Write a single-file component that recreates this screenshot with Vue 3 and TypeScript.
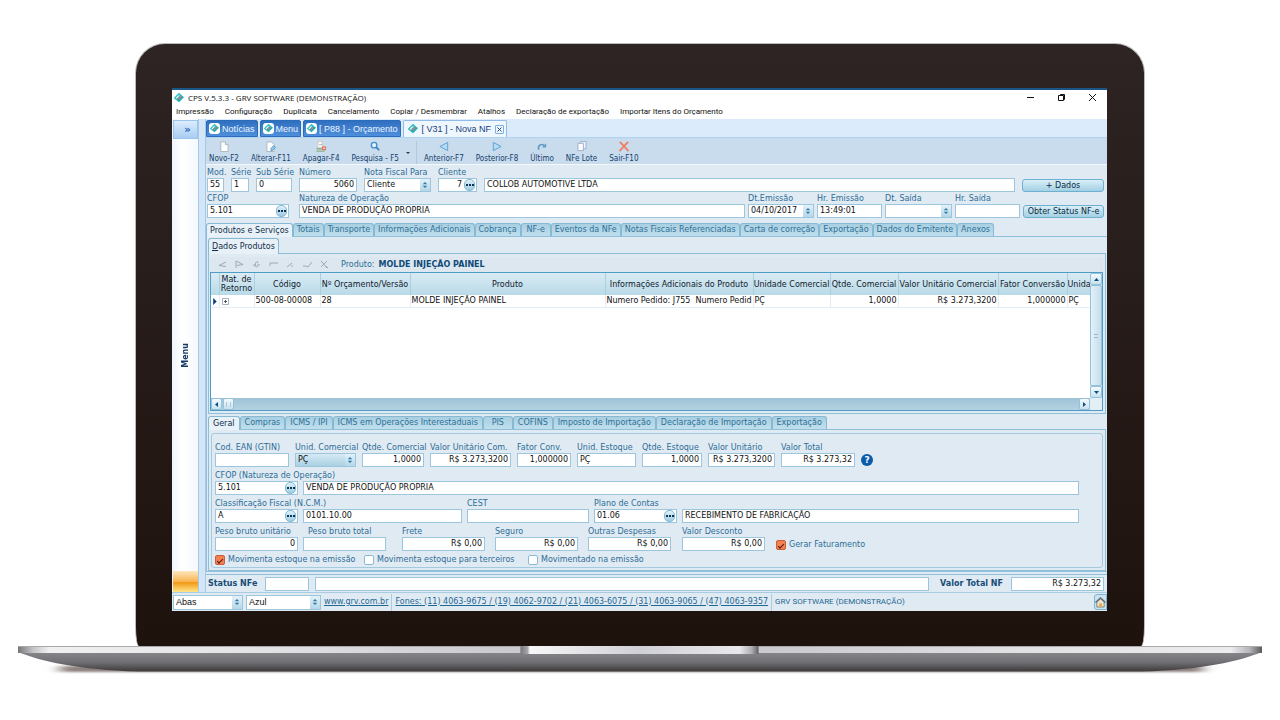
<script setup lang="ts">
import { ref } from 'vue'

type Kind = 'text' | 'select' | 'spin' | 'lookup' | 'button' | 'check' | 'help'
interface Field {
  id: string
  label: string
  value?: string
  kind?: Kind
  right?: boolean
  cls?: string
  checked?: boolean
}
interface Row { cls: string; fields: Field[] }

const menus = ['Impressão', 'Configuração', 'Duplicata', 'Cancelamento', 'Copiar / Desmembrar', 'Atalhos', 'Declaração de exportação', 'Importar Itens do Orçamento']
const docTabs = ['Notícias', 'Menu', '[ P88 ] - Orçamento']

const tools = [
  { label: 'Novo-F2', icon: 'new' },
  { label: 'Alterar-F11', icon: 'edit' },
  { label: 'Apagar-F4', icon: 'delete' },
  { label: 'Pesquisa - F5', icon: 'search' },
  { label: '', icon: 'more' },
  { label: 'Anterior-F7', icon: 'prev' },
  { label: 'Posterior-F8', icon: 'next' },
  { label: 'Último', icon: 'last' },
  { label: 'NFe Lote', icon: 'batch' },
  { label: 'Sair-F10', icon: 'exit' },
]

const headRows: Row[] = [
  {
    cls: 'r-head1',
    fields: [
      { id: 'mod', label: 'Mod.', value: '55' },
      { id: 'serie', label: 'Série', value: '1' },
      { id: 'subserie', label: 'Sub Série', value: '0' },
      { id: 'numero', label: 'Número', value: '5060', right: true },
      { id: 'nfpara', label: 'Nota Fiscal Para', value: 'Cliente', kind: 'select' },
      { id: 'cliente', label: 'Cliente', value: '7', right: true, kind: 'lookup' },
      { id: 'clientenome', label: '', value: 'COLLOB AUTOMOTIVE LTDA' },
      { id: 'dados', label: '+ Dados', kind: 'button' },
    ],
  },
  {
    cls: 'r-head2',
    fields: [
      { id: 'cfop', label: 'CFOP', value: '5.101', kind: 'lookup', cls: 'spaced' },
      { id: 'natureza', label: 'Natureza de Operação', value: 'VENDA DE PRODUÇÃO PROPRIA' },
      { id: 'dtemissao', label: 'Dt.Emissão', value: '04/10/2017', kind: 'spin' },
      { id: 'hremissao', label: 'Hr. Emissão', value: '13:49:01' },
      { id: 'dtsaida', label: 'Dt. Saída', value: '', kind: 'spin' },
      { id: 'hrsaida', label: 'Hr. Saída', value: '' },
      { id: 'status', label: 'Obter Status NF-e', kind: 'button' },
    ],
  },
]

const detailRows: Row[] = [
  {
    cls: 'r-a',
    fields: [
      { id: 'ean', label: 'Cod. EAN (GTIN)', value: '' },
      { id: 'unidcom', label: 'Unid. Comercial', value: 'PÇ', kind: 'select', cls: 'tinted' },
      { id: 'qtdecom', label: 'Qtde. Comercial', value: '1,0000', right: true },
      { id: 'valorcom', label: 'Valor Unitário Com.', value: 'R$ 3.273,3200', right: true },
      { id: 'fator', label: 'Fator Conv.', value: '1,000000', right: true },
      { id: 'unidest', label: 'Unid. Estoque', value: 'PÇ' },
      { id: 'qtdeest', label: 'Qtde. Estoque', value: '1,0000', right: true },
      { id: 'valorunit', label: 'Valor Unitário', value: 'R$ 3.273,3200', right: true },
      { id: 'valortotal', label: 'Valor Total', value: 'R$ 3.273,32', right: true },
      { id: 'ajuda', label: 'Ajuda', kind: 'help' },
    ],
  },
  {
    cls: 'r-b',
    fields: [
      { id: 'cfop2', label: 'CFOP (Natureza de Operação)', value: '5.101', kind: 'lookup' },
      { id: 'cfop2nome', label: '', value: 'VENDA DE PRODUÇÃO PROPRIA' },
    ],
  },
  {
    cls: 'r-c',
    fields: [
      { id: 'ncm', label: 'Classificação Fiscal (N.C.M.)', value: 'A', kind: 'lookup' },
      { id: 'ncmcod', label: '', value: '0101.10.00' },
      { id: 'cest', label: 'CEST', value: '' },
      { id: 'plano', label: 'Plano de Contas', value: '01.06', kind: 'lookup' },
      { id: 'planonome', label: '', value: 'RECEBIMENTO DE FABRICAÇÃO' },
    ],
  },
  {
    cls: 'r-d',
    fields: [
      { id: 'pesou', label: 'Peso bruto unitário', value: '0', right: true },
      { id: 'pesot', label: 'Peso bruto total', value: '', cls: 'indent' },
      { id: 'frete', label: 'Frete', value: 'R$ 0,00', right: true },
      { id: 'seguro', label: 'Seguro', value: 'R$ 0,00', right: true },
      { id: 'outras', label: 'Outras Despesas', value: 'R$ 0,00', right: true },
      { id: 'desconto', label: 'Valor Desconto', value: 'R$ 0,00', right: true },
      { id: 'faturamento', label: 'Gerar Faturamento', kind: 'check', checked: true },
    ],
  },
  {
    cls: 'r-e',
    fields: [
      { id: 'movest', label: 'Movimenta estoque na emissão', kind: 'check', checked: true },
      { id: 'movter', label: 'Movimenta estoque para terceiros', kind: 'check' },
      { id: 'movemi', label: 'Movimentado na emissão', kind: 'check' },
    ],
  },
]

const mainTabs = ['Produtos e Serviços', 'Totais', 'Transporte', 'Informações Adicionais', 'Cobrança', 'NF-e', 'Eventos da NFe', 'Notas Fiscais Referenciadas', 'Carta de correção', 'Exportação', 'Dados do Emitente', 'Anexos']
const detailTabs = ['Geral', 'Compras', 'ICMS / IPI', 'ICMS em Operações Interestaduais', 'PIS', 'COFINS', 'Imposto de Importação', 'Declaração de Importação', 'Exportação']
const mainTab = ref(0)
const detailTab = ref(0)

const navIcons = [
  'M8 2 1 5.500 8 6.500',
  'M1 8V1l7 3.500-6 1',
  'M1 5.500 4 4M3 7 4 2M5 1l1 2M5 5h3M4 7l2-1',
  'M1 6V3h8',
  'M1 7 6 3M5 6h2',
  'M0 6h3l2 1 4-5',
  'M1 1l6 7M7 1 1 7M6 6l2 2',
]

const columns = [
  { title: '', cls: 'c-mark', right: false },
  { title: 'Mat. de Retorno', cls: 'c-mat', right: false },
  { title: 'Código', cls: 'c-cod', right: false },
  { title: 'Nº Orçamento/Versão', cls: 'c-orc', right: false },
  { title: 'Produto', cls: 'c-prod', right: false },
  { title: 'Informações Adicionais do Produto', cls: 'c-info', right: false },
  { title: 'Unidade Comercial', cls: 'c-uni', right: false },
  { title: 'Qtde. Comercial', cls: 'c-qtd', right: true },
  { title: 'Valor Unitário Comercial', cls: 'c-val', right: true },
  { title: 'Fator Conversão', cls: 'c-fat', right: true },
  { title: 'Unida', cls: 'c-und', right: false },
]
const line = ['', '', '500-08-00008', '28', 'MOLDE INJEÇÃO PAINEL', 'Numero Pedido: J755  Numero Pedid', 'PÇ', '1,0000', 'R$ 3.273,3200', '1,000000', 'PÇ']
</script>

<template>
  <svg class="defs" aria-hidden="true">
    <symbol id="logo" viewBox="0 0 12 12">
      <path d="M6 0 12 5 6 11 0 6Z" fill="#12b3b8" />
      <path d="M6 0 9 3 3 9 0 6Z" fill="#35c4c6" />
      <path d="M8 3 10 5 5 9 3 7Z" fill="#8b8d92" />
      <path d="M5 3h2L3 7 2 6Z" fill="#e8fafa" />
    </symbol>
    <symbol id="spin" viewBox="0 0 8 10">
      <path d="M4 1 7 4H1ZM1 6h6L4 9Z" fill="#2f7aa6" />
    </symbol>
  </svg>

  <div class="laptop">
    <div class="lid">
      <main class="screen">
        <header class="titlebar">
          <svg class="app-logo"><use href="#logo" /></svg>
          <h1>CPS V.5.3.3 - GRV SOFTWARE (DEMONSTRAÇÃO)</h1>
          <div class="win">
            <button aria-label="Minimizar"><svg viewBox="0 0 9 9"><path d="M1 4.500h7" /></svg></button>
            <button aria-label="Restaurar"><svg viewBox="0 0 9 9"><path d="M3.500 2.500V1.500h4v5h-1M1.500 2.500h5v5h-5z" /></svg></button>
            <button aria-label="Fechar"><svg viewBox="0 0 9 9"><path d="M1 1l7 7M8 1 1 8" /></svg></button>
          </div>
        </header>
        <nav class="menubar"><button v-for="m in menus" :key="m">{{ m }}</button></nav>

        <div class="work">
          <aside class="side">
            <button class="expand" aria-label="Expandir">»</button>
            <span class="side-label">Menu</span>
            <span class="side-foot"></span>
          </aside>

          <section class="content">
            <div class="doctabs">
              <button v-for="t in docTabs" :key="t" class="doctab">
                <span class="chip"><svg><use href="#logo" /></svg></span>{{ t }}
              </button>
              <div class="doctab current">
                <svg class="cur-logo"><use href="#logo" /></svg>[ V31 ] - Nova NF
                <button class="close" aria-label="Fechar aba"><svg viewBox="0 0 7 7"><path d="M1.500 1.500l4 4M5.500 1.500l-4 4" /></svg></button>
              </div>
            </div>

            <div class="toolbar">
              <button v-for="t in tools" :key="t.icon" class="tool" :class="t.icon" :aria-label="t.label || 'Mais opções'">
                <svg v-if="t.icon === 'new'" viewBox="0 0 12 12"><path d="M2.500 1h5l3 3v7.500h-8z" fill="#fdfefe" stroke="#a9b3bc" /><path d="M7.500 1v3h3" fill="#dfe6ec" stroke="#a9b3bc" /></svg>
                <svg v-else-if="t.icon === 'edit'" viewBox="0 0 12 12"><path d="M1.500 1h5l3 3v7.500h-8z" fill="#fdfefe" stroke="#a9b3bc" /><path d="M6 11l0-3 3-3 2 2-3 3z" fill="#8fc6e6" stroke="#5f9fca" /></svg>
                <svg v-else-if="t.icon === 'delete'" viewBox="0 0 12 12"><path d="M2.500.5h5v7h-5z" fill="#f7f8f5" stroke="#c3c8c5" /><path d="M1 8.500h6M1 11h9" stroke="#8fae86" stroke-width="1.500" /><path d="M4 4h3" stroke="#a3b39b" /><path d="M7 6h4.500v4H7z" fill="#e5705c" /><path d="M8 8h2.500" stroke="#fff" /></svg>
                <svg v-else-if="t.icon === 'search'" viewBox="0 0 12 12"><circle cx="5" cy="4.500" r="3" fill="#e4f2fc" stroke="#3d8fd1" stroke-width="1.500" /><path d="M7.500 7 10.500 10" stroke="#3878b5" stroke-width="1.800" /></svg>
                <svg v-else-if="t.icon === 'more'" class="caret" viewBox="0 0 6 4"><path d="M1 1h4L3 3z" fill="#163a5c" /></svg>
                <svg v-else-if="t.icon === 'prev'" viewBox="0 0 12 12"><path d="M10 1.500v9L1.500 6z" fill="#b4daf4" stroke="#5b9fd2" /></svg>
                <svg v-else-if="t.icon === 'next'" viewBox="0 0 12 12"><path d="M2 1.500v9L10.500 6z" fill="#b4daf4" stroke="#5b9fd2" /></svg>
                <svg v-else-if="t.icon === 'last'" viewBox="0 0 12 12"><path d="M2.500 9.500c-1.500-5 2.500-7 6-4.500" fill="none" stroke="#5b9dc4" stroke-width="1.800" /><path d="M10.500 2.500v4.500H6z" fill="#5b9dc4" /></svg>
                <svg v-else-if="t.icon === 'batch'" viewBox="0 0 12 12"><path d="M4.500 .5h6v8h-6z" fill="#eef3fa" stroke="#9aabc9" /><path d="M1.500 2.500h6v8h-6z" fill="#fbfcfe" stroke="#9aabc9" /></svg>
                <svg v-else viewBox="0 0 12 12"><path d="M1.500 1 11 11M10.500 1 1 11" stroke="#ee7f63" stroke-width="2" /></svg>
                <span v-if="t.label">{{ t.label }}</span>
              </button>
            </div>

            <form class="head" @submit.prevent>
              <div v-for="row in headRows" :key="row.cls" class="row" :class="row.cls">
                <template v-for="f in row.fields" :key="f.id">
                  <button v-if="f.kind === 'button'" class="action">{{ f.label }}</button>
                  <div v-else class="field" :class="f.cls">
                    <label :for="f.id">{{ f.label }}</label>
                    <div class="box" :class="f.kind">
                      <select v-if="f.kind === 'select'" :id="f.id"><option>{{ f.value }}</option></select>
                      <input v-else :id="f.id" :value="f.value" :class="{ right: f.right }" :aria-label="f.label || f.value" />
                      <button v-if="f.kind === 'lookup'" class="dots" aria-label="Procurar"><i></i><i></i><i></i></button>
                      <span v-if="f.kind === 'select' || f.kind === 'spin'" class="spinner"><svg><use href="#spin" /></svg></span>
                    </div>
                  </div>
                </template>
              </div>
            </form>

            <div class="tabs">
              <button v-for="(t, i) in mainTabs" :key="t" :class="{ on: i === mainTab }" @click="mainTab = i">{{ t }}</button>
            </div>
            <div class="sheet">
              <div class="tabs inner"><button class="on"><u>D</u>ados Produtos</button></div>
              <div class="products">
                <div class="navbar">
                  <button v-for="(d, i) in navIcons" :key="i" :aria-label="'Navegar ' + (i + 1)"><svg viewBox="0 0 9 9"><path :d="d" /></svg></button>
                  <span>Produto:</span><strong>MOLDE INJEÇÃO PAINEL</strong>
                </div>
                <div class="gridbox">
                  <div class="gridmain">
                    <table>
                      <colgroup><col v-for="c in columns" :key="c.cls" :class="c.cls" /></colgroup>
                      <thead><tr><th v-for="c in columns" :key="c.cls">{{ c.title }}</th></tr></thead>
                      <tbody>
                        <tr>
                          <td v-for="(v, i) in line" :key="i" :class="{ right: columns[i].right }">
                            <svg v-if="i === 0" class="mark" viewBox="0 0 5 8"><path d="M1 0 5 4 1 8z" fill="#0d3f73" /></svg>
                            <svg v-else-if="i === 1" class="plus" viewBox="0 0 7 7"><path d="M.5.5h6v6h-6z" fill="#fff" stroke="#a5b1bc" /><path d="M2 3.500h3M3.500 2v3" stroke="#555" /></svg>
                            <template v-else>{{ v }}</template>
                          </td>
                        </tr>
                      </tbody>
                    </table>
                    <div class="hscroll">
                      <button aria-label="Esquerda"><svg viewBox="0 0 5 7"><path d="M4 1v5L1 3.500z" /></svg></button>
                      <span class="hthumb"></span>
                      <button class="end" aria-label="Direita"><svg viewBox="0 0 5 7"><path d="M1 1v5l3-2.500z" /></svg></button>
                    </div>
                  </div>
                  <div class="vscroll">
                    <button aria-label="Acima"><svg viewBox="0 0 7 5"><path d="M1 4h5L3.500 1z" /></svg></button>
                    <span class="vthumb"></span>
                    <button aria-label="Abaixo"><svg viewBox="0 0 7 5"><path d="M1 1h5L3.500 4z" /></svg></button>
                    <span class="corner"></span>
                  </div>
                </div>
              </div>
              <div class="tabs roomy">
                <button v-for="(t, i) in detailTabs" :key="t" :class="{ on: i === detailTab }" @click="detailTab = i">{{ t }}</button>
              </div>
              <div class="detail-wrap">
                <form class="detail" @submit.prevent>
                  <div v-for="row in detailRows" :key="row.cls" class="row" :class="row.cls">
                    <template v-for="f in row.fields" :key="f.id">
                      <label v-if="f.kind === 'check'" class="check"><input type="checkbox" :checked="f.checked" /><span>{{ f.label }}</span></label>
                      <button v-else-if="f.kind === 'help'" class="help" :aria-label="f.label">?</button>
                      <div v-else class="field">
                        <label :for="f.id" :class="f.cls">{{ f.label }}</label>
                        <div class="box" :class="[f.kind, f.cls === 'tinted' ? f.cls : '']">
                          <select v-if="f.kind === 'select'" :id="f.id"><option>{{ f.value }}</option></select>
                          <input v-else :id="f.id" :value="f.value" :class="{ right: f.right }" :aria-label="f.label || f.value" />
                          <button v-if="f.kind === 'lookup'" class="dots" aria-label="Procurar"><i></i><i></i><i></i></button>
                          <span v-if="f.kind === 'select'" class="spinner"><svg><use href="#spin" /></svg></span>
                        </div>
                      </div>
                    </template>
                  </div>
                </form>
              </div>
            </div>

            <div class="totals">
              <label for="stnfe">Status NFe</label>
              <div class="box short"><input id="stnfe" /></div>
              <div class="box grow"><input aria-label="Mensagem" /></div>
              <label for="total">Valor Total NF</label>
              <div class="box total"><input id="total" class="right" value="R$ 3.273,32" /></div>
            </div>
          </section>
        </div>

        <footer class="foot">
          <div class="box select abas"><select aria-label="Modo"><option>Abas</option></select><span class="spinner"><svg><use href="#spin" /></svg></span></div>
          <div class="box select azul"><select aria-label="Tema"><option>Azul</option></select><span class="spinner"><svg><use href="#spin" /></svg></span></div>
          <a href="#site">www.grv.com.br</a>
          <a href="#fones">Fones: (11) 4063-9675 / (19) 4062-9702 / (21) 4063-6075 / (31) 4063-9065 / (47) 4063-9357</a>
          <span class="company">GRV SOFTWARE (DEMONSTRAÇÃO)</span>
          <button class="home" aria-label="Início"><svg viewBox="0 0 12 12"><path d="M2 6v5.500h8V6L6 2.500z" fill="#e9e4d6" stroke="#7c7f83" /><path d="M.5 6.500 6 1.500l5.500 5" fill="none" stroke="#666c72" stroke-width="1.500" /><path d="M4.500 7.500h3v4h-3z" fill="#f0a83c" /></svg></button>
        </footer>
      </main>
    </div>

    <svg class="base" viewBox="0 0 1243 32" preserveAspectRatio="none" aria-hidden="true">
      <defs>
        <linearGradient id="body" x1="0" y1="0" x2="0" y2="1"><stop offset="0" stop-color="#87878b" /><stop offset=".5" stop-color="#727276" /><stop offset="1" stop-color="#3d3a3b" /></linearGradient>
        <linearGradient id="rim"><stop offset="0" stop-color="#77757a" /><stop offset=".012" stop-color="#c4c4c8" /><stop offset=".025" stop-color="#f0f0f1" /><stop offset=".2" stop-color="#e2e2e5" /><stop offset=".4" stop-color="#c9c9ce" /><stop offset=".6" stop-color="#c9c9ce" /><stop offset=".8" stop-color="#e0e0e3" /><stop offset=".975" stop-color="#ececee" /><stop offset=".99" stop-color="#b5b5b9" /><stop offset="1" stop-color="#5a585c" /></linearGradient>
        <linearGradient id="notch"><stop offset="0" stop-color="#77757a" /><stop offset=".03" stop-color="#a7a7ab" /><stop offset=".04" stop-color="#f7f7f8" /><stop offset=".5" stop-color="#cfcfd6" /><stop offset=".92" stop-color="#e9e9ec" /><stop offset=".97" stop-color="#b0b0b4" /><stop offset="1" stop-color="#605e62" /></linearGradient>
        <filter id="soft" x="-5%" y="-100%" width="110%" height="300%"><feGaussianBlur stdDeviation="7 1" /></filter>
      </defs>
      <rect x="42" y="20" width="1142" height="6" fill="#8f8380" filter="url(#soft)" />
      <path d="M0 6C22 15 60 24 120 25.500H1123C1183 24 1221 15 1243 6z" fill="url(#body)" />
      <rect width="1243" height="7" fill="url(#rim)" />
      <rect width="1243" height="1" fill="#a9a9ac" />
      <rect x="502" y="0" width="238" height="8" fill="url(#notch)" />
    </svg>
  </div>
</template>

<style>
body {
  background: #fff;
}
</style>

<style scoped>
.defs { position: absolute; width: 0; height: 0; }
.laptop { padding: 43px 18px 0; }
.laptop, .laptop button, .laptop input, .laptop select {
  font-family: "DejaVu Sans", Verdana, sans-serif;
  font-size: 8px;
  line-height: 10px;
}
.laptop .box input, .laptop .box select { line-height: 12px; }
button, input, select { margin: 0; padding: 0; border: 0; background: none; color: inherit; outline: 0; box-sizing: border-box; }
button { cursor: pointer; white-space: nowrap; }
svg { display: block; }

.lid {
  margin: 0 117px;
  padding: 44px 37px 35px 36px;
  border: 1px solid #b9bcba;
  border-bottom: 0;
  border-radius: 30px 30px 4px 4px / 30px 30px 20px 20px;
  background: linear-gradient(#2d2423, #1e120d);
}
.base { width: 100%; height: 32px; }

.screen { border-top: 2px solid #1a5585; background: #e0eaf2; overflow: hidden; color: #111; }

.titlebar { display: flex; align-items: center; height: 15px; padding: 0 10px 0 2px; background: #fff; }
.app-logo { width: 10px; height: 10px; }
.titlebar h1 { margin: 0 auto 0 4px; font: 400 8px/15px "Open Sans", "Segoe UI", sans-serif; }
.win { display: flex; gap: 22px; }
.win svg { width: 9px; height: 9px; fill: none; stroke: #111; }
.menubar { display: flex; gap: 11px; height: 14px; padding: 0 4px; background: #fff; }
.laptop .menubar button { font: 400 8px/14px Roboto, "Segoe UI", sans-serif; }

.work { display: flex; border-bottom: 1px solid #a9cce0; }
.side { display: flex; flex-direction: column; align-items: stretch; width: 25px; padding: 1px 0 0 1px; background: linear-gradient(90deg, #eef5fd, #fff 40%, #f4f9fe); border-right: 1px solid #a5c8ec; }
.laptop .expand { height: 19px; padding-left: 4px; border: 1px solid #9cc3ea; background: linear-gradient(#dcecfd, #a9cdf3); color: #1f62b5; font: 700 10px/15px "DejaVu Sans", sans-serif; }
.side-label { margin: auto; writing-mode: vertical-rl; transform: rotate(180deg); font: 700 8px/10px "DejaVu Sans", sans-serif; color: #163a66; }
.side-foot { height: 21px; background: linear-gradient(#fde6bd, #f8b552 50%, #f39a17 55%, #ffe58a); }

.content { flex: 1; min-width: 0; margin-left: 6px; border-left: 1px solid #a5c8e4; box-shadow: -6px 0 #d3e6f8; }
.doctabs { display: flex; gap: 2px; height: 19px; padding: 1px 0 0; background: #dcebfc; border-bottom: 1px solid #aed3f4; box-sizing: border-box; }
.laptop .doctab { display: flex; align-items: center; gap: 2px; padding: 0 2px; border: 1px solid #2d6cb8; border-radius: 2px 2px 0 0; background: linear-gradient(#2f6fc0, #4e8fdb); color: #eef5fd; font: 400 9px/16px "Liberation Sans", Arial, sans-serif; white-space: nowrap; }
.laptop .doctab.current { gap: 4px; padding-left: 4px; background: #eef6fe; border-color: #8fbbe6; border-bottom: 0; color: #173f7c; }
.chip { padding: 1px; border-radius: 3px; background: #fff; }
.chip svg { width: 9px; height: 9px; }
.cur-logo { width: 10px; height: 10px; }
.close svg { width: 9px; height: 9px; box-sizing: border-box; border: 1px solid #7fb0de; border-radius: 1px; fill: none; stroke: #1d4e8f; }

.toolbar { display: flex; gap: 12px; height: 27px; padding: 3px 3px 0; background: #c9dcee; border-bottom: 1px solid #f3f8fc; box-sizing: border-box; }
.tool { display: flex; flex-direction: column; align-items: center; gap: 1px; color: #153f6b; }
.laptop .tool span { font: 400 8px/11px "DejaVu Sans Condensed", Tahoma, sans-serif; }
.tool svg { width: 12px; height: 12px; }
.tool.more { padding-right: 5px; border-right: 1px solid #b1c9e0; margin: 0 -5px 0 -6px; justify-content: center; }
.tool .caret { width: 6px; height: 4px; }

.head { padding: 2px 3px 5px 1px; }
.row { display: grid; }
.head .row + .row { margin-top: 1px; }
.r-head1 { grid-template-columns: 17px 18px 36px 58px 67px 39px 1fr 82px; gap: 7px; }
.r-head2 { grid-template-columns: 89px 1fr 66px 65px 67px 65px 81px; gap: 3px; }
.spaced { padding-right: 7px; }
.field { min-width: 0; }
.field label { display: block; height: 11px; line-height: 11px; white-space: nowrap; color: #2d6d98; }
.field .indent { padding-left: 5px; }
.box { display: flex; position: relative; height: 14px; border: 1px solid #9cc6de; background: #fff; box-sizing: border-box; }
.box input, .box select { flex: 1; width: 100%; min-width: 0; padding: 0 2px; appearance: none; color: #111; }
.right { text-align: right; }
.lookup input { padding-right: 1px; }
.spinner { display: flex; align-items: center; justify-content: center; width: 10px; background: linear-gradient(#e3f1f8, #b4d7e8); }
.select .spinner { position: absolute; top: 0; right: 0; bottom: 0; pointer-events: none; }
.spinner svg { width: 6px; height: 8px; }
.dots { display: flex; align-items: center; justify-content: center; gap: 1px; width: 11px; margin: 0 1px; border: 1px solid #82b8d4; border-radius: 5px; background: linear-gradient(#e0f1f9, #9fcce3); }
.dots i { width: 2px; height: 2px; background: #0d3653; }
.action { align-self: end; height: 13px; border: 1px solid #6fb0d0; border-radius: 3px; background: linear-gradient(#d9eff8, #a3d0e4); color: #0c2b40; }

.tabs { display: flex; height: 14px; border-bottom: 1px solid #8fc0da; box-sizing: border-box; }
.tabs button { min-width: 30px; padding: 0 3px; border: 1px solid #86b9d3; border-bottom: 0; border-radius: 3px 3px 0 0; background: linear-gradient(#a9cfe1, #c0dfed); color: #2f7198; }
.tabs .on { height: 14px; background: #e8f1f7; color: #0f2e4a; }
.roomy button { padding: 0 4px; }
.inner { height: 16px; }
.inner .on { height: 16px; }
.sheet { padding: 1px 1px 0; border-left: 1px solid #8fc0da; margin-bottom: 2px; border-bottom: 1px solid #8fc0da; }
.products { padding: 3px 2px 2px 1px; border: 1px solid #8fc0da; border-top: 0; margin-bottom: 2px; }
.navbar { display: flex; align-items: center; gap: 8px; height: 15px; padding: 0 8px; background: #dce7ef; color: #2d6d98; }
.navbar svg { width: 9px; height: 9px; fill: none; stroke: #9aaab7; }
.navbar strong { margin-left: -4px; color: #0f4a78; }
.navbar span { margin-left: 4px; }

.gridbox { display: flex; border: 1px solid #4f9cc8; background: #fff; }
.gridmain { flex: 1; min-width: 0; display: flex; flex-direction: column; }
table { width: 100%; table-layout: fixed; border-collapse: collapse; margin-bottom: auto; }
th { height: 22px; padding: 0; border-right: 1px solid #aacfe0; background: linear-gradient(#d9ebf3, #b9dae8); font-weight: 400; line-height: 9px; color: #10202c; overflow: hidden; }
td { height: 12px; padding: 0 1px; border-right: 1px solid #e3edf3; border-bottom: 1px solid #e3edf3; white-space: pre; overflow: hidden; line-height: 10px; }
th:last-child, td:last-child { border-right: 0; }
.mark { width: 5px; height: 7px; }
.plus { width: 7px; height: 7px; margin-left: 1px; }
.c-mark { width: 8px; }
.c-mat { width: 35px; }
.c-cod { width: 66px; }
.c-orc { width: 90px; }
.c-info { width: 148px; }
.c-uni { width: 77px; }
.c-qtd { width: 68px; }
.c-val { width: 100px; }
.c-fat { width: 69px; }
.c-und { width: 23px; }
.hscroll { display: flex; gap: 1px; height: 12px; margin-top: 90px; background: linear-gradient(#9fc3d6, #b3d2e2); }
.hscroll button, .vscroll button, .hthumb, .vthumb { border: 1px solid #93c2da; border-radius: 2px; background: linear-gradient(#f3fafd, #c8e2ef); box-sizing: border-box; }
.hscroll button, .hthumb { display: flex; align-items: center; justify-content: center; width: 11px; }
.hthumb::after { content: ""; width: 3px; height: 5px; border: solid #a9cbdc; border-width: 0 1px; }
.hscroll .end { margin-left: auto; }
.hscroll svg { width: 5px; height: 7px; }
.vscroll svg { width: 7px; height: 5px; margin: auto; }
.hscroll path, .vscroll path { fill: #0f4f80; }
.vscroll { display: flex; flex-direction: column; width: 12px; background: #cfe3ee; }
.vscroll button { height: 12px; }
.vthumb { flex: 1; display: flex; align-items: center; justify-content: center; background: linear-gradient(90deg, #e3f1f8, #c5deeb); }
.vthumb::after { content: ""; width: 4px; height: 2px; border: solid #92bbd0; border-width: 1px 0; }
.corner { height: 12px; background: #e4eff5; }

.detail-wrap { padding: 3px 2px 2px; border: 1px solid #8fc0da; border-top: 0; }
.detail { padding: 8px 3px 1px; border: 1px solid #a4cadf; border-radius: 3px; }
.detail .row + .row { margin-top: 3px; }
.detail .row { padding-right: 20px; }
.r-a { grid-template-columns: 74px 61px 62px 81px 54px 59px 60px 67px 74px 12px; gap: 6px; }
.r-b { grid-template-columns: 83px 1fr; gap: 5px; }
.r-c { grid-template-columns: 83px 159px 122px 83px 1fr; gap: 5px; }
.r-d { grid-template-columns: 83px 94px 88px 88px 89px 89px 1fr; gap: 5px; }
.r-d .box { width: 83px; }
.r-e { grid-template-columns: 144px 159px 1fr; gap: 5px; }
.tinted, .tinted select { background: linear-gradient(#d6eaf4, #a9d0e3); }
label.tinted { background: none; }
.check { display: flex; align-items: center; gap: 3px; align-self: end; white-space: nowrap; color: #2d6d98; height: 12px; }
.check input { appearance: none; width: 10px; height: 10px; border: 1px solid #8abbd6; border-radius: 2px; background: #fff; }
.check input:checked { border-color: #c7603a; background: #f47f51; display: flex; align-items: center; justify-content: center; }
.check input:checked::after { content: ""; width: 5px; height: 2px; border: solid #4a1707; border-width: 0 0 1px 1px; transform: rotate(-45deg); }
.laptop .help { align-self: end; height: 12px; margin-bottom: 1px; border-radius: 50%; background: #0b5bab; color: #fff; font: 700 9px/12px "DejaVu Sans", sans-serif; }

.totals { display: flex; align-items: center; gap: 6px; padding: 2px 3px 1px 2px; border-top: 1px solid #8fc0da; }
.totals label { font-weight: 700; color: #174c77; margin-right: 2px; white-space: nowrap; }
.totals .grow { flex: 1; margin-right: 5px; }
.short { width: 44px; }
.total { width: 93px; }

.foot { display: flex; align-items: center; height: 18px; color: #1f6893; white-space: nowrap; }
.foot .box { height: 15px; margin: 0 2px 0 1px; }
.laptop .foot select { font: 400 9px/12px "Liberation Sans", Arial, sans-serif; }
.abas { width: 70px; }
.azul { width: 75px; }
.foot a { padding: 3px 3px 4px 1px; border-right: 1px solid #a9cce0; color: inherit; }
.foot a + a { padding-left: 3px; }
.company { margin-left: 3px; font: 400 8px/10px Roboto, sans-serif; }
.home { margin-left: auto; height: 16px; border: 1px solid #7fb6d3; border-radius: 3px 0 0 3px; background: #c9e3f0; }
.home svg { width: 11px; height: 12px; }
</style>
